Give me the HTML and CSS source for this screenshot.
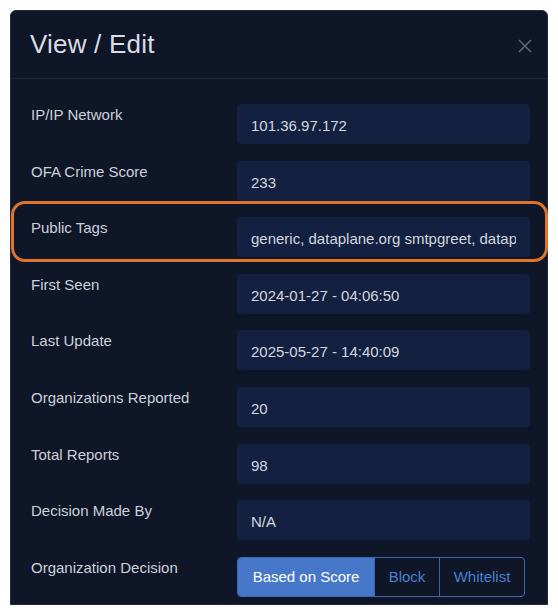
FILE: index.html
```html
<!DOCTYPE html>
<html>
<head>
<meta charset="utf-8">
<link rel="stylesheet" href="styles.css">
</head>
<body>
<div class="page">
  <div class="modal">
    <div class="modal-header">
      <h2 class="modal-title">View / Edit</h2>
      <svg class="close" width="14" height="14" viewBox="0 0 14 14"><path d="M1 1L13 13M13 1L1 13" stroke="#5b6477" stroke-width="1.6" fill="none"/></svg>
    </div>
    <div class="modal-body">
      <div class="row"><div class="label">IP/IP Network</div><div class="field"><span class="val">101.36.97.172</span></div></div>
      <div class="row"><div class="label">OFA Crime Score</div><div class="field"><span class="val">233</span></div></div>
      <div class="row highlight"><div class="label">Public Tags</div><div class="field"><span class="val">generic, dataplane.org smtpgreet, dataplane.org sshpwauth</span></div></div>
      <div class="row"><div class="label">First Seen</div><div class="field"><span class="val">2024-01-27 - 04:06:50</span></div></div>
      <div class="row"><div class="label">Last Update</div><div class="field"><span class="val">2025-05-27 - 14:40:09</span></div></div>
      <div class="row"><div class="label">Organizations Reported</div><div class="field"><span class="val">20</span></div></div>
      <div class="row"><div class="label">Total Reports</div><div class="field"><span class="val">98</span></div></div>
      <div class="row"><div class="label">Decision Made By</div><div class="field"><span class="val">N/A</span></div></div>
      <div class="row"><div class="label">Organization Decision</div>
        <div class="btn-group">
          <span class="btn active">Based on Score</span>
          <span class="btn">Block</span>
          <span class="btn">Whitelist</span>
        </div>
      </div>
    </div>
  </div>
</div>
</body>
</html>
```
FILE: styles.css
```css
html, body {
  margin: 0;
  padding: 0;
  background: #ffffff;
  font-family: "Liberation Sans", Arial, sans-serif;
}
.page {
  padding: 10px 10px 0 10px;
  height: 615px;
  box-sizing: border-box;
  overflow: hidden;
}
.modal {
  background: #0e1628;
  border: 1px solid #1f2a40;
  border-radius: 6px 6px 0 0;
  height: 595px;
  box-sizing: border-box;
}
.modal-header {
  display: flex;
  justify-content: space-between;
  align-items: center;
  height: 67px;
  padding: 0 15px 0 19px;
  border-bottom: 1px solid #1c2944;
}
.modal-title {
  margin: 0;
  font-weight: normal;
  font-size: 26px;
  color: #d9dde4;
  letter-spacing: 0.2px;
}
.close {
  display: block;
  margin-top: 2px;
}
.modal-body {
  padding: 25px 17px 0 20px;
  display: flex;
  flex-direction: column;
  gap: 16.6px;
}
.row {
  display: grid;
  grid-template-columns: 206px minmax(0, 1fr);
  position: relative;
}
.label {
  font-size: 15px;
  line-height: 20px;
  color: #ccd1d9;
  padding-top: 1px;
}
.field {
  background: #142040;
  border-radius: 4px;
  height: 40px;
  box-sizing: border-box;
  padding: 12px 14px 0 14px;
  min-width: 0;
}
.val {
  display: block;
  font-size: 15px;
  line-height: 20px;
  color: #d3d7de;
  white-space: nowrap;
  overflow: hidden;
}
.highlight::after {
  content: "";
  position: absolute;
  left: -20px;
  right: -18px;
  top: -16px;
  bottom: -5px;
  border: 3px solid #e2732a;
  border-radius: 14px;
  pointer-events: none;
}
.btn-group {
  display: flex;
  width: 288px;
  height: 40px;
  border: 1px solid #3a67b0;
  border-radius: 4px;
  box-sizing: border-box;
  overflow: hidden;
}
.btn {
  display: flex;
  align-items: center;
  justify-content: center;
  font-size: 15px;
  color: #4b7fd1;
}
.btn + .btn {
  border-left: 1px solid #3a67b0;
}
.btn.active {
  background: #4677c8;
  color: #ffffff;
  width: 136px;
}
.btn:nth-child(2) {
  width: 64px;
}
.btn:nth-child(3) {
  flex: 1;
}
```
